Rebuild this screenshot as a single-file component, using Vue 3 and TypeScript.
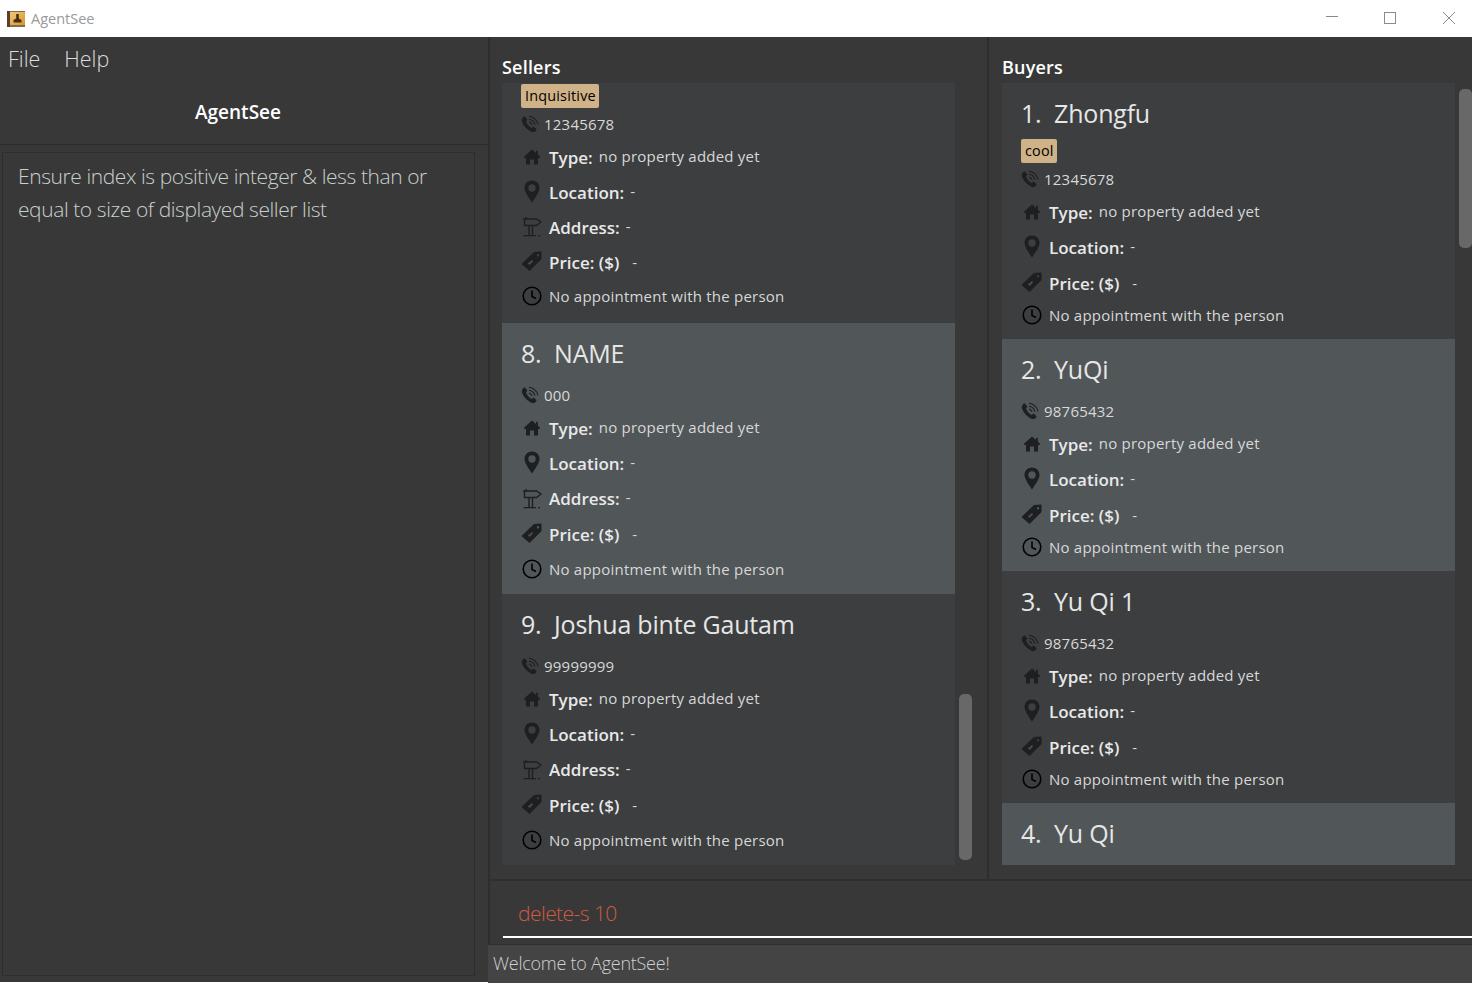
<script setup lang="ts">
interface Person {
  name?: string
  tag?: string
  phone?: string
  addr: boolean
  even?: boolean
}
const sellers: Person[] = [
  { tag: 'Inquisitive', phone: '12345678', addr: true },
  { name: '8.  NAME', phone: '000', addr: true, even: true },
  { name: '9.  Joshua binte Gautam', phone: '99999999', addr: true },
]
const buyers: Person[] = [
  { name: '1.  Zhongfu', tag: 'cool', phone: '12345678', addr: false },
  { name: '2.  YuQi', phone: '98765432', addr: false, even: true },
  { name: '3.  Yu Qi 1', phone: '98765432', addr: false },
  { name: '4.  Yu Qi', addr: false, even: true },
]
const panels = [
  { title: 'Sellers', people: sellers, kind: 'sellers' },
  { title: 'Buyers', people: buyers, kind: 'buyers' },
]
</script>

<template>
  <div class="window">
    <header class="titlebar">
      <svg class="appicon" viewBox="0 0 18 16" width="18" height="16">
        <defs>
          <linearGradient id="cover" x1="0" y1="0" x2="1" y2="1">
            <stop offset="0" stop-color="#f0c878" />
            <stop offset="1" stop-color="#d9952f" />
          </linearGradient>
        </defs>
        <rect x="0" y="0" width="18" height="16" fill="#8a6a48" />
        <rect x="0" y="0" width="3" height="16" fill="#5b4028" />
        <rect x="3" y="1" width="15" height="13" fill="url(#cover)" />
        <path d="M9.2 3 H11.8 V7.5 L14.5 9 V11.5 H6.5 V9 L9.2 7.5 Z" fill="#4a3010" />
      </svg>
      <span class="apptitle">AgentSee</span>
      <div class="controls">
        <span class="min"></span>
        <span class="max"></span>
        <svg class="close" viewBox="0 0 12 12" width="12" height="12"><path d="M0 0 L12 12 M12 0 L0 12" stroke="#8a8a8a" stroke-width="1" /></svg>
      </div>
    </header>
    <div class="main">
      <aside class="side">
        <nav class="menu"><span>File</span><span>Help</span></nav>
        <div class="brand">AgentSee</div>
        <div class="result">Ensure index is positive integer &amp; less than or equal to size of displayed seller list</div>
      </aside>
      <div class="work">
        <div class="panels">
          <section v-for="p in panels" :key="p.title" class="panel" :class="p.kind">
            <h2>{{ p.title }}</h2>
            <div class="list-wrap">
              <div class="list">
                <article
                  v-for="(c, i) in p.people"
                  :key="i"
                  class="card"
                  :class="{ even: c.even, clipped: !c.name }"
                >
                  <div v-if="c.name" class="name">{{ c.name }}</div>
                  <div v-if="c.tag" class="tags"><span>{{ c.tag }}</span></div>
                  <template v-if="c.phone">
                    <div class="row phone">
                      <svg viewBox="0 0 18 18" width="18" height="18" class="ico-phone">
                        <path d="M3.6 1.2 L6.4 4.4 L5 6.6 C5.6 9 8.2 11.8 10.6 13 L12.6 11.6 L15.6 14.2 L14.2 16.4 C13 17.4 11.2 17.2 9.4 16.2 C5.4 14.2 2.2 10.4 1 6.6 C0.5 4.8 1.1 3 2.3 2 Z" fill="#1d1f20" />
                        <path d="M8 1.2 C12.4 1.6 16.2 5 17 9.4 M8 4.2 C10.8 4.6 13.2 6.8 13.8 9.6 M8 7 C9.4 7.4 10.6 8.4 11 9.8" fill="none" stroke="#1d1f20" stroke-width="1.1" />
                      </svg>
                      <span class="val">{{ c.phone }}</span>
                    </div>
                    <div class="row type">
                      <span class="ic">
                        <svg class="i-home" viewBox="0 0 16 16" width="16" height="16"><path d="M8 0.5 L12 4 V1.8 H13.8 V5.6 L15.8 7.6 V9 H14 V15.5 H10 V10.5 H6 V15.5 H2 V9 H0.2 V7.6 Z" fill="#1d1f20" /></svg>
                      </span>
                      <b class="type-label">Type:</b><span class="val up">no property added yet</span>
                    </div>
                    <div class="row loc">
                      <span class="ic">
                        <svg class="i-pin" viewBox="0 0 16 23" width="16" height="23"><path fill-rule="evenodd" d="M8 0.5 C12.2 0.5 15.5 3.7 15.5 7.8 C15.5 12 11 18 8 22.5 C5 18 0.5 12 0.5 7.8 C0.5 3.7 3.8 0.5 8 0.5 Z M8 4.3 A3.7 3.7 0 1 0 8 11.7 A3.7 3.7 0 1 0 8 4.3 Z" fill="#1d1f20" /></svg>
                      </span>
                      <b>Location:</b><span class="dash up">-</span>
                    </div>
                    <div v-if="c.addr" class="row addr">
                      <span class="ic">
                        <svg class="i-sign" viewBox="0 0 20 21" width="20" height="21"><path d="M4 1 V3 M1 3 H14.5 L19 6 L14.5 9.5 H2.5 V3 M7 9.5 V19 M10.5 9.5 V19 M1.5 19.6 H14" fill="none" stroke="#1d1f20" stroke-width="1.4" /><rect x="16" y="19" width="2" height="1.3" fill="#1d1f20" /></svg>
                      </span>
                      <b>Address:</b><span class="dash up">-</span>
                    </div>
                    <div class="row price">
                      <span class="ic">
                        <svg class="i-tag" viewBox="0 0 21 21" width="21" height="21"><path fill-rule="evenodd" d="M13 1 L20.5 0.5 L20.5 8 L8.5 20 L0.5 13 Z M17 3 A1.2 1.2 0 1 0 17 5.4 A1.2 1.2 0 1 0 17 3 Z" fill="#1d1f20" /><path d="M7.5 13 L9.5 13 L10 10 L12 10 M8.5 11 L7.5 13 M11 12 L10 10" fill="none" stroke="#5a5d5f" stroke-width="0.8" /></svg>
                      </span>
                      <b>Price: ($)</b><span class="pdash">-</span>
                    </div>
                    <div class="row appt">
                      <span class="ic">
                        <svg class="i-clock" viewBox="0 0 20 20" width="20" height="20"><circle cx="10" cy="10" r="8.8" fill="none" stroke="#000" stroke-width="1.6" /><path d="M10 4.5 V10.5 L14 12.5" fill="none" stroke="#000" stroke-width="1.6" /></svg>
                      </span>
                      <span class="val">No appointment with the person</span>
                    </div>
                  </template>
                </article>
              </div>
              <div class="track"><div class="thumb"></div></div>
            </div>
          </section>
        </div>
        <div class="command"><div class="field">delete-s 10</div></div>
        <div class="status">Welcome to AgentSee!</div>
      </div>
    </div>
  </div>
</template>

<style>
html, body { margin: 0; background: #fff; }
</style>

<style scoped>
.window {
  width: 1472px;
  height: 983px;
  display: flex;
  flex-direction: column;
  overflow: hidden;
  font-family: "Open Sans", "Noto Sans", sans-serif;
  color: #fff;
}
.titlebar {
  height: 37px;
  flex: none;
  display: flex;
  align-items: center;
  background: #fff;
  padding-left: 7px;
  box-sizing: border-box;
}
.appicon { margin-right: 6px; }
.apptitle { font-size: 14.5px; color: #9a9a9a; }
.controls { margin-left: auto; display: flex; align-items: center; height: 100%; padding-right: 17px; margin-top: -1px; }
.min { width: 12px; height: 1px; background: #8a8a8a; margin-right: 46px; margin-top: -3px; }
.max { width: 10px; height: 10px; border: 1px solid #8a8a8a; margin-right: 47px; }
.main { flex: 1; display: flex; min-height: 0; }
.side {
  width: 490px;
  flex: none;
  height: 945px;
  box-sizing: border-box;
  background: #383838;
  border-right: 2px solid #2e2e2e;
  display: flex;
  flex-direction: column;
}
.menu {
  height: 42px;
  display: flex;
  gap: 24px;
  padding-left: 8px;
  font-size: 21.5px;
  font-weight: 300;
  color: #dcdcdc;
  align-items: center;
}
.brand {
  height: 66px;
  box-sizing: border-box;
  border-bottom: 1px solid #2b2b2b;
  font-size: 19px;
  font-weight: 600;
  text-align: center;
  line-height: 66px;
  padding-right: 12px;
}
.result {
  flex: 1;
  margin: 7px 13px 6px 2px;
  border: 1px solid #2e2e2e;
  padding: 7px 15px;
  font-size: 21px;
  font-weight: 300;
  letter-spacing: -0.42px;
  line-height: 33px;
  color: #c9d0cf;
}
.work { flex: 1; display: flex; flex-direction: column; min-width: 0; background: #383838; }
.panels { height: 844px; flex: none; display: flex; box-sizing: border-box; border-bottom: 2px solid #2e2e2e; }
.panel { width: 499px; flex: none; box-sizing: border-box; padding-left: 12px; display: flex; flex-direction: column; }
.panel.sellers { border-right: 2px solid #2e2e2e; }
.panel.buyers { width: 483px; padding-left: 13px; }
h2 {
  margin: 0;
  height: 46px;
  flex: none;
  box-sizing: border-box;
  padding-top: 17px;
  font-size: 18px;
  letter-spacing: 0.2px;
  line-height: 26px;
  font-weight: 600;
}
.list-wrap { height: 782px; display: flex; flex: none; }
.list { width: 453px; height: 782px; overflow: hidden; flex: none; background: #3c3e3f; }
.track { flex: 1; position: relative; }
.thumb { position: absolute; left: 4px; width: 13px; background: #686868; border-radius: 5px; }
.sellers .thumb { top: 611px; height: 166px; }
.buyers .thumb { top: 6px; height: 159px; left: 4px; }
.card { padding: 12px 0 12px 19px; background: #3c3e3f; box-sizing: border-box; }
.sellers .card { padding-bottom: 10px; }
.card.even { background: #515658; }
.card.clipped { padding-top: 0; padding-bottom: 11px; }
.name { height: 38px; font-size: 25px; letter-spacing: -0.2px; line-height: 36px; color: #e6e6e6; white-space: pre; }
.tags { margin: 6px 0 -6px; height: 24px; display: flex; }
.tags span {
  background: #cfb287;
  color: #000;
  font-size: 14.4px;
  letter-spacing: 0.2px;
  line-height: 24px;
  padding: 0 3px 0 4px;
  border-radius: 2px;
}
.clipped .tags { margin-top: 1px; }
.row { display: flex; align-items: center; font-size: 15px; color: #d8d8d8; box-sizing: border-box; }
.row b { font-size: 17px; font-weight: 600; color: #e8e8e8; margin-right: 5px; }
.row b.type-label { margin-right: 6px; }
.phone { height: 30px; margin-top: 7px; }
.ico-phone { margin-right: 5px; }
.loc, .price { height: 36px; }
.type { height: 35px; padding-top: 2px; }
.addr { height: 35px; }
.clipped .addr { height: 34px; }
.sellers .appt { height: 32px; padding-top: 2px; }
.clipped .appt { padding-top: 0; }
.buyers .appt { height: 26px; padding-top: 2px; }
.ic { width: 28px; flex: none; display: flex; align-items: center; }
.i-home, .i-pin { margin-left: 3px; }
.i-pin { margin-top: -2px; }
.i-home { margin-top: -2px; }
.i-sign { margin-left: 1px; margin-top: -1px; }
.i-tag { margin-top: -2px; }
.i-clock { margin-left: 1px; }
.up { position: relative; top: -1.5px; }
.dash { font-size: 15px; margin-left: 1px; }
.pdash { font-size: 15px; margin-left: 8px; }
.val { font-size: 15px; letter-spacing: 0.22px; color: #d8d8d8; }
.command {
  height: 63px;
  flex: none;
  box-sizing: border-box;
  padding: 0 0 6px 13px;
  display: flex;
}
.field {
  flex: 1;
  border-bottom: 2px solid #fff;
  color: #d15a41;
  font-size: 21px;
  font-weight: 300;
  letter-spacing: -0.55px;
  padding: 14px 0 0 15px;
  line-height: 36px;
}
.status {
  flex: 1;
  background: #444;
  border-top: 1px solid #2e2e2e;
  margin-left: -2px;
  padding-left: 5px;
  font-size: 18px;
  font-weight: 300;
  letter-spacing: -0.25px;
  line-height: 36px;
  color: #d0d0d0;
}
</style>
